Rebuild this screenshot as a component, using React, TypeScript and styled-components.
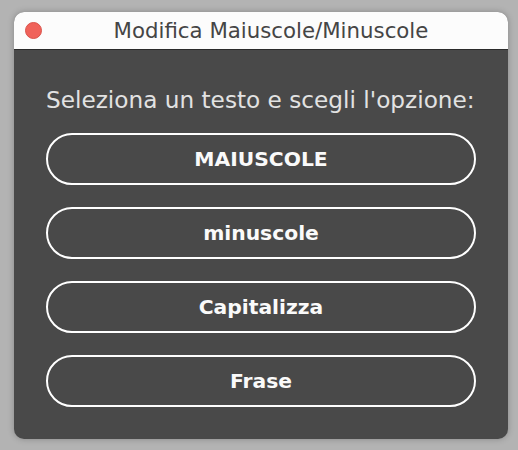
import React from "react";
import styled, { createGlobalStyle } from "styled-components";

const GlobalStyle = createGlobalStyle`
  html, body {
    margin: 0;
    padding: 0;
    background: #b3b3b3;
  }
  body {
    font-family: "DejaVu Sans", "Open Sans", sans-serif;
  }
`;

const Page = styled.div`
  width: 518px;
  height: 450px;
  padding: 12px 10px 11px 14px;
  box-sizing: border-box;
`;

const Window = styled.div`
  height: 100%;
  display: flex;
  flex-direction: column;
  border-radius: 10px;
  overflow: hidden;
  background: #494949;
  box-shadow: 0 0 6px rgba(0, 0, 0, 0.25);
`;

const TitleBar = styled.div`
  position: relative;
  height: 37px;
  padding-left: 20px;
  background: #fcfcfc;
  border-bottom: 1px solid #2a2a2a;
  display: flex;
  align-items: center;
  justify-content: center;
  font-size: 21.3px;
  color: #454545;
`;

const CloseDot = styled.span`
  position: absolute;
  left: 11px;
  top: 10px;
  width: 17px;
  height: 17px;
  border-radius: 50%;
  background: #f0625a;
  border: 0.5px solid #d9534b;
  box-sizing: border-box;
`;

const Body = styled.div`
  flex: 1;
  padding: 38px 32px 0 32px;
  display: flex;
  flex-direction: column;
  gap: 22px;
`;

const Label = styled.div`
  color: #e2e2e2;
  font-size: 23.2px;
  line-height: 24px;
  margin-bottom: -1px;
  white-space: nowrap;
`;

const Option = styled.button`
  height: 52px;
  width: 430px;
  box-sizing: border-box;
  border: 2px solid #ffffff;
  border-radius: 26px;
  background: transparent;
  color: #fafafa;
  font-family: "DejaVu Sans", "Open Sans", sans-serif;
  font-size: 20.3px;
  font-weight: 700;
  cursor: pointer;
`;

const options = ["MAIUSCOLE", "minuscole", "Capitalizza", "Frase"];

const App = () => {
  return (
    <>
      <GlobalStyle />
      <Page>
        <Window>
          <TitleBar>
            <CloseDot />
            Modifica Maiuscole/Minuscole
          </TitleBar>
          <Body>
            <Label>Seleziona un testo e scegli l'opzione:</Label>
            {options.map((o) => (
              <Option key={o}>{o}</Option>
            ))}
          </Body>
        </Window>
      </Page>
    </>
  );
};

export default App;
